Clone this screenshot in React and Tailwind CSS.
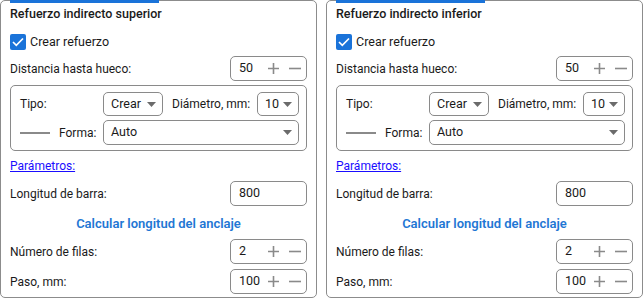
import React from "react";

const font = { fontFamily: 'Roboto, "Noto Sans", sans-serif' };

function Arrow() {
  return (
    <svg width="9" height="5" viewBox="0 0 9 5" className="shrink-0">
      <path d="M0 0 H9 L4.5 5 Z" fill="#6b6b6b" />
    </svg>
  );
}

function Spinner({ value }) {
  return (
    <div className="flex items-center w-[77px] h-[25px] border border-[#8a8a8a] rounded-[5px] pl-[8px] pr-[5px]">
      <span className="flex-1 text-[12.5px] text-[#1a1a1a]">{value}</span>
      <svg width="11" height="11" viewBox="0 0 11 11" className="mr-[10px]">
        <path d="M5.5 0 V11 M0 5.5 H11" stroke="#8a8a8a" strokeWidth="1.6" />
      </svg>
      <svg width="12" height="11" viewBox="0 0 12 11">
        <path d="M0 5.5 H12" stroke="#8a8a8a" strokeWidth="1.6" />
      </svg>
    </div>
  );
}

function Input({ value }) {
  return (
    <div className="flex items-center w-[77px] h-[25px] border border-[#8a8a8a] rounded-[5px] pl-[8px]">
      <span className="text-[12.5px] text-[#1a1a1a]">{value}</span>
    </div>
  );
}

function Row({ label, children, className = "" }) {
  return (
    <div className={"flex items-center justify-between h-[25px] " + className}>
      <span className="text-[12px] text-[#1a1a1a] whitespace-nowrap">{label}</span>
      {children}
    </div>
  );
}

function Select({ value, className }) {
  return (
    <div className={"flex items-center justify-between border border-[#8a8a8a] rounded-[5px] pl-[7px] pr-[6px] shrink-0 " + className}>
      <span className="text-[12.5px] text-[#1a1a1a]">{value}</span>
      <Arrow />
    </div>
  );
}

function Panel({ title }) {
  return (
    <div className="relative w-[317px] h-[298px] border border-[#8c8c8c] rounded-[5px] px-[9px] shrink-0">
      <div className="absolute left-[9px] top-[-1px] w-[149px] h-[3px] bg-[#1a73d9]" />
      <div className="pt-[4px] h-[26px] text-[12.5px] text-[#1a1a1a] font-medium leading-[18px] whitespace-nowrap">{title}</div>
      <div className="flex items-center mt-[6px] h-[18px]">
        <div className="w-[16px] h-[16px] bg-[#1a73d9] rounded-[2px] flex items-center justify-center">
          <svg width="12" height="10" viewBox="0 0 12 10">
            <path d="M1 5 L4.3 8.3 L11 1.5" stroke="white" strokeWidth="1.7" fill="none" />
          </svg>
        </div>
        <span className="ml-[4px] text-[12.5px] text-[#1a1a1a]">Crear refuerzo</span>
      </div>
      <Row label="Distancia hasta hueco:" className="mt-[5px]">
        <Spinner value="50" />
      </Row>
      <div className="mt-[4px] h-[66px] border border-[#8a8a8a] rounded-[5px] pl-[9px] pr-[8px] pt-[6px]">
        <div className="flex items-center h-[24px]">
          <span className="w-[83px] shrink-0 text-[12px] text-[#1a1a1a]">Tipo:</span>
          <Select value="Crear" className="w-[60px] h-[24px]" />
          <span className="ml-[9px] w-[85px] shrink-0 text-[12px] text-[#1a1a1a] whitespace-nowrap">Diámetro, mm:</span>
          <Select value="10" className="w-[42px] h-[24px]" />
        </div>
        <div className="flex items-center h-[25px] mt-[4px]">
          <div className="w-[30px] h-[2px] bg-[#8a8a8a] shrink-0" />
          <span className="ml-[9px] w-[44px] shrink-0 text-[12px] text-[#1a1a1a]">Forma:</span>
          <Select value="Auto" className="w-[196px] h-[25px]" />
        </div>
      </div>
      <div className="mt-[5px] h-[17px] leading-[17px]">
        <span className="text-[12px] text-[#1a0dff] underline">Parámetros:</span>
      </div>
      <Row label="Longitud de barra:" className="mt-[8px]">
        <Input value="800" />
      </Row>
      <div className="mt-[9px] h-[18px] flex items-center justify-center">
        <span className="text-[13px] font-semibold text-[#1f77d4] whitespace-nowrap">Calcular longitud del anclaje</span>
      </div>
      <Row label="Número de filas:" className="mt-[6px]">
        <Spinner value="2" />
      </Row>
      <Row label="Paso, mm:" className="mt-[5px]">
        <Spinner value="100" />
      </Row>
    </div>
  );
}

export default function App() {
  return (
    <div style={font} className="w-[643px] h-[299px] bg-white flex gap-[9px]">
      <Panel title="Refuerzo indirecto superior" />
      <Panel title="Refuerzo indirecto inferior" />
    </div>
  );
}
